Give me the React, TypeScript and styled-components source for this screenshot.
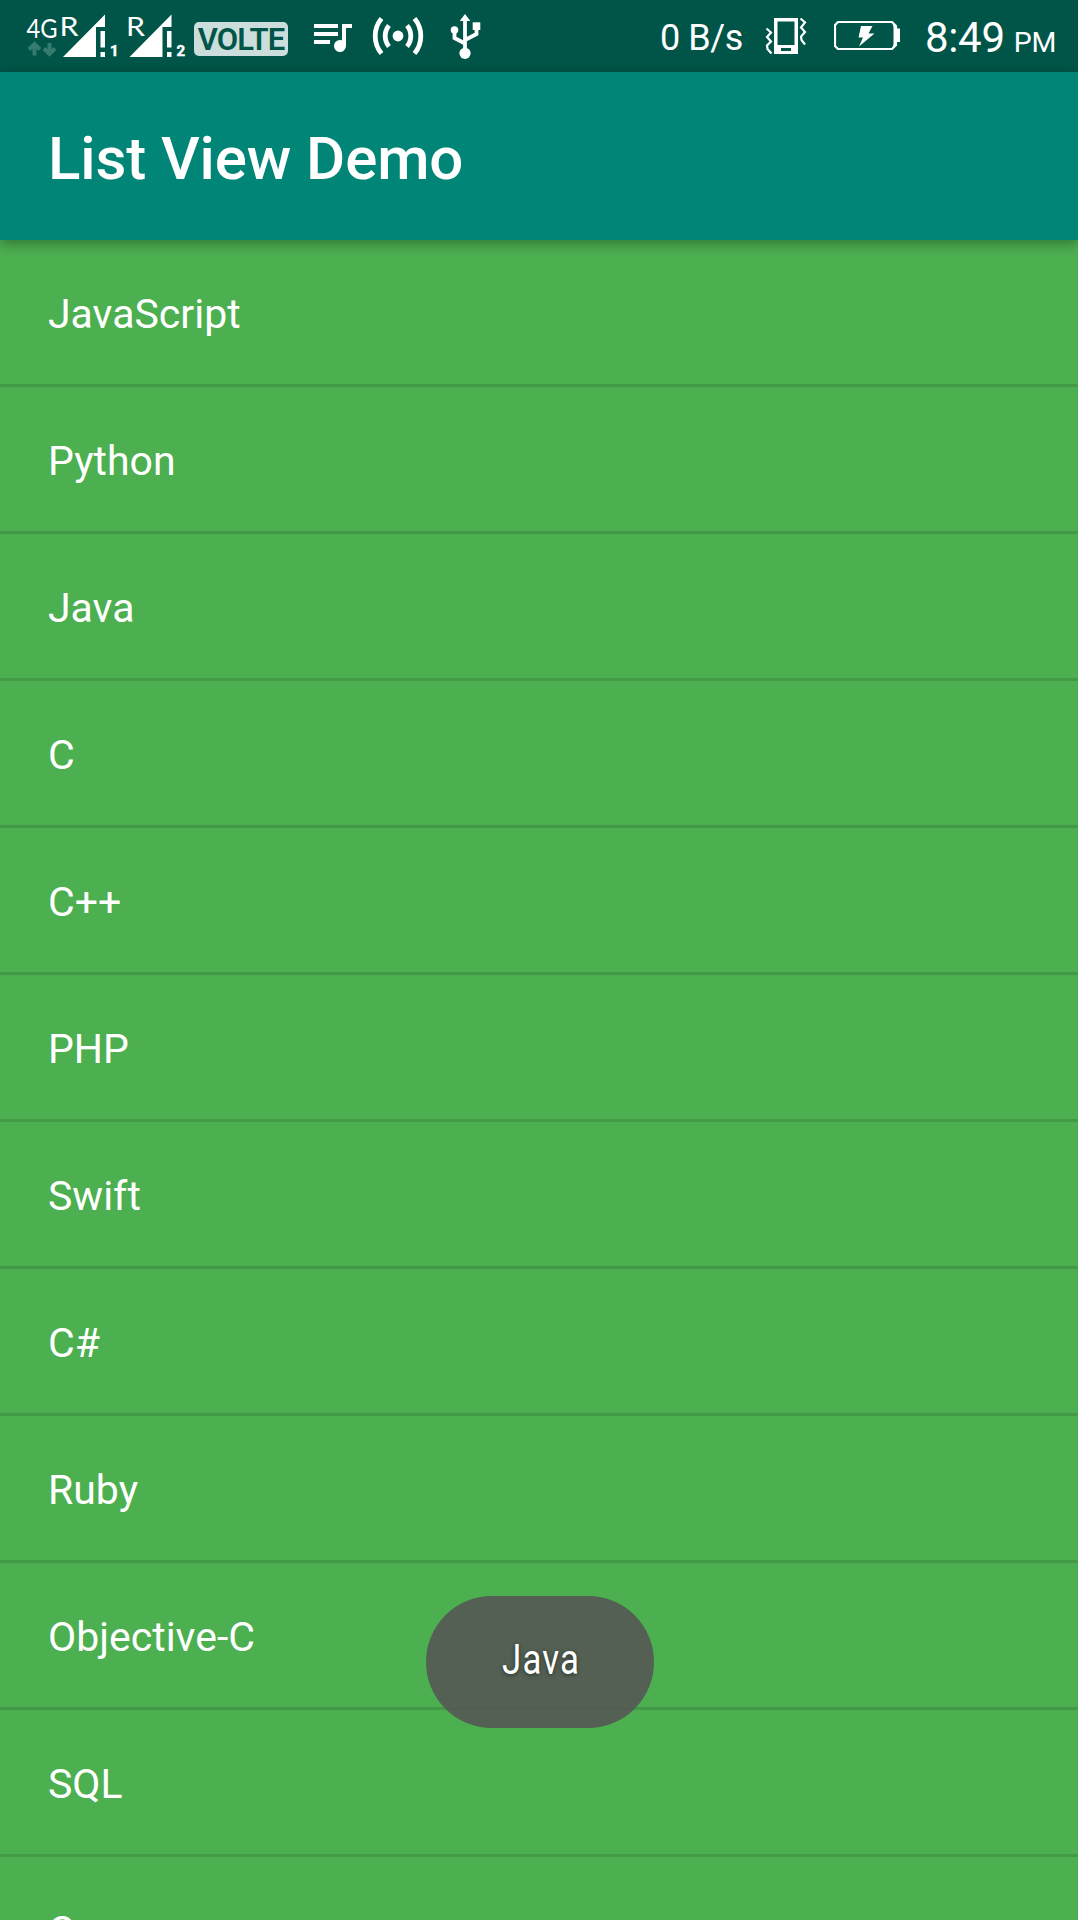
import React from "react";
import styled, { createGlobalStyle } from "styled-components";

const GlobalStyle = createGlobalStyle`
  * { box-sizing: border-box; }
  body { margin: 0; background: #4caf50; font-family: Roboto, sans-serif; color: #fff; }
`;

const Screen = styled.div`
  position: relative;
  width: 1078px;
  height: 1920px;
  overflow: hidden;
  display: flex;
  flex-direction: column;
  background: #4caf50;
`;

const StatusBar = styled.header`
  flex: none;
  height: 72px;
  padding: 0 22px 0 26px;
  display: flex;
  justify-content: space-between;
  background: #005548;
`;

const StatusGroup = styled.div`
  display: flex;
  align-items: flex-start;
`;

const Icon = styled.svg<{ $gap?: number }>`
  display: block;
  flex: none;
  margin-left: ${(p) => p.$gap ?? 0}px;
`;

const VolteBadge = styled.span`
  width: 94px;
  height: 34px;
  margin: 22px 0 0 8px;
  border-radius: 5px;
  background: #cbdedb;
  color: #005548;
  font-size: 31px;
  font-weight: 600;
  line-height: 36px;
  letter-spacing: -0.9px;
  text-align: center;
`;

const NetSpeed = styled.span`
  font-size: 36px;
  line-height: 72px;
  padding-top: 2px;
  letter-spacing: -0.4px;
  white-space: nowrap;
`;

const Clock = styled.time`
  margin-left: 24px;
  font-size: 42px;
  line-height: 72px;
  padding-top: 2px;
  letter-spacing: -0.3px;
  white-space: nowrap;
`;

const Meridiem = styled.span`
  margin-left: 9px;
  font-size: 28.500px;
`;

const AppBar = styled.div`
  flex: none;
  position: relative;
  z-index: 1;
  height: 168px;
  padding: 5px 48px 0;
  display: flex;
  align-items: center;
  background: #008577;
  box-shadow: 0 4px 12px rgba(0, 0, 0, 0.32);
`;

const Title = styled.h1`
  margin: 0;
  font-size: 60px;
  font-weight: 500;
  line-height: 80px;
  letter-spacing: -0.1px;
`;

const List = styled.ul`
  margin: 0;
  padding: 0;
  list-style: none;
`;

const Row = styled.li`
  height: 147px;
  padding: 4px 48px 0;
  display: flex;
  align-items: center;
  border-bottom: 3px solid #439a46;
  font-size: 41px;
`;

const Toast = styled.div`
  position: absolute;
  left: 426px;
  top: 1596px;
  z-index: 2;
  width: 228px;
  height: 132px;
  border-radius: 66px;
  display: flex;
  align-items: center;
  justify-content: center;
  background: rgba(84, 84, 84, 0.865);
`;

const ToastText = styled.span`
  font-size: 42px;
  line-height: 1;
  letter-spacing: 1.4px;
  transform: translate(1px, -2px) scaleX(0.83);
  white-space: nowrap;
  text-shadow: 0 1px 5px rgba(0, 0, 0, 0.5);
`;

const SignalLabel = styled.text`
  font-family: Lato, sans-serif;
  font-size: 27.500px;
  fill: #fff;
`;

const SimNumber = styled.text`
  font-family: Roboto, sans-serif;
  font-size: 15px;
  font-weight: 700;
  fill: #fff;
  stroke: #fff;
  stroke-width: 0.5px;
`;

function Signal({ x, sim }: { x: number; sim: string }) {
  return (
    <g transform={`translate(${x} 0)`}>
      <SignalLabel x="-3.500" y="36" textLength="19" lengthAdjust="spacingAndGlyphs">R</SignalLabel>
      <path d="M0 57 42 14.500V27H33V57Z" fill="#fff" />
      <path d="M37.500 31H42V47.500H37.500ZM37.500 52H42V57H37.500Z" fill="#fff" />
      <SimNumber x="47" y="56">{sim}</SimNumber>
    </g>
  );
}

const SignalIcons = () => (
  <Icon width="160" height="72" viewBox="26 0 160 72">
    <SignalLabel x="26.500" y="37.500" textLength="31" lengthAdjust="spacingAndGlyphs">4G</SignalLabel>
    <path
      d="M34.500 55.500V45M29 49.500 34.500 44 40 49.500M49.500 43V53M44 48.500 49.500 54 55 48.500"
      fill="none"
      stroke="#357b70"
      strokeWidth="4"
    />
    <Signal x={63} sim="1" />
    <Signal x={129.5} sim="2" />
  </Icon>
);

const QueueMusicIcon = () => (
  <Icon $gap={26} width="38" height="72" viewBox="314 0 38 72" fill="#fff">
    <path d="M314 24h24v4h-24zM314 32h24v4h-24zM314 40h16v4h-16z" />
    <path d="M342 24H352V28H346V46A6 6 0 1 1 342 40.300Z" />
  </Icon>
);

const HotspotIcon = () => (
  <Icon $gap={20} width="52" height="72" viewBox="372 0 52 72" fill="none" stroke="#fff" strokeWidth="4.800">
    <circle cx="398" cy="36" r="5.400" fill="#fff" stroke="none" />
    <path d="M389 25.500Q385.200 30 385.200 36T389 46.500M407 25.500Q410.800 30 410.800 36T407 46.500" />
    <path d="M381.500 18.500Q375.200 26 375.200 36T381.500 53.500M414.500 18.500Q420.800 26 420.800 36T414.500 53.500" />
  </Icon>
);

const UsbIcon = () => (
  <Icon $gap={26} width="32" height="72" viewBox="450 0 32 72" fill="none" stroke="#fff" strokeWidth="3.800">
    <path d="M465 18V52M454.500 31V38L465 43.500M476.500 27V34L465 40" />
    <path d="M465 14 470.300 21H459.700Z" fill="#fff" stroke="none" />
    <circle cx="454.500" cy="30" r="3.800" fill="#fff" stroke="none" />
    <circle cx="465" cy="53.300" r="5.600" fill="#fff" stroke="none" />
    <path d="M472.700 22.300H480.300V30H472.700Z" fill="#fff" stroke="none" />
  </Icon>
);

const VibrateIcon = () => (
  <Icon $gap={22} width="42" height="72" viewBox="765 0 42 72">
    <path
      fill="#fff"
      fillRule="evenodd"
      d="M774 18H798V54H774ZM777.500 21.500V45H794.500V21.500ZM781 48V51H791V48Z"
    />
    <path
      d="M766.500 28.500 771 32.500 767 37 771 41.500 767 45.500 767.500 49 771.500 53.500M800.500 18.500 805 22.500 801 27.500 805 32 801 36.500 801.500 40 805 44.500"
      fill="none"
      stroke="#fff"
      strokeWidth="2.200"
    />
  </Icon>
);

const BatteryIcon = () => (
  <Icon $gap={27} width="67" height="72" viewBox="834 0 67 72">
    <path
      d="M838 22H892L896 26V45L892 49H838L835 46V25Z"
      fill="none"
      stroke="#fff"
      strokeWidth="2.200"
      strokeLinejoin="round"
    />
    <path d="M892 21.500 896.500 26V28.500H900V42H896.500V45.500L892 49.500 893.500 44V27Z" fill="#fff" />
    <path d="M861 26H872.500L868.500 33.500H874.500L859 46.500 863 37.500H858.500Z" fill="#fff" />
  </Icon>
);

const languages = [
  "JavaScript",
  "Python",
  "Java",
  "C",
  "C++",
  "PHP",
  "Swift",
  "C#",
  "Ruby",
  "Objective-C",
  "SQL",
  "C",
];

export default function App() {
  return (
    <Screen>
      <GlobalStyle />
      <StatusBar>
        <StatusGroup>
          <SignalIcons />
          <VolteBadge>VOLTE</VolteBadge>
          <QueueMusicIcon />
          <HotspotIcon />
          <UsbIcon />
        </StatusGroup>
        <StatusGroup>
          <NetSpeed>0 B/s</NetSpeed>
          <VibrateIcon />
          <BatteryIcon />
          <Clock>
            8:49<Meridiem>PM</Meridiem>
          </Clock>
        </StatusGroup>
      </StatusBar>
      <AppBar>
        <Title>List View Demo</Title>
      </AppBar>
      <List>
        {languages.map((name, i) => (
          <Row key={i}>{name}</Row>
        ))}
      </List>
      <Toast role="status">
        <ToastText>Java</ToastText>
      </Toast>
    </Screen>
  );
}
